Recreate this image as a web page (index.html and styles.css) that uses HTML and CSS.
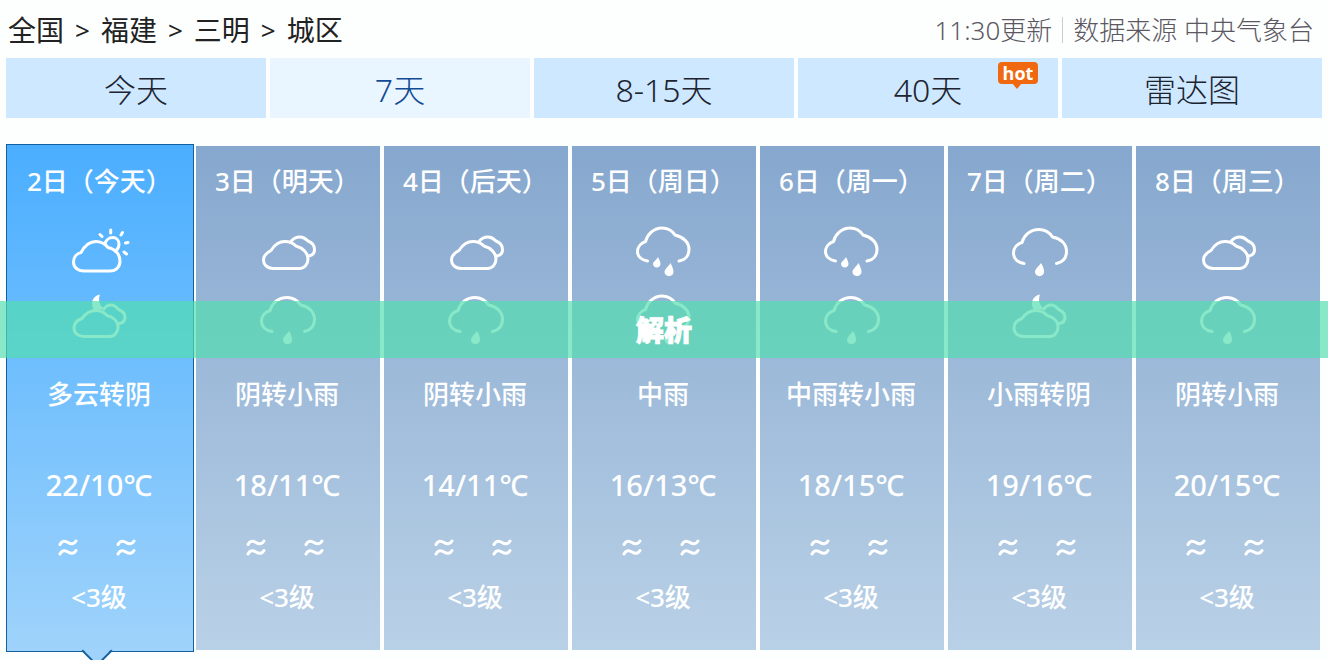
FILE: index.html
```html
<!DOCTYPE html>
<html lang="zh-CN">
<head>
  <meta charset="UTF-8">
  <title>城区天气预报</title>
  <link rel="stylesheet" href="styles.css">
</head>
<body>

  <!-- Weather icons -->
  <svg class="icon-defs" width="0" height="0" aria-hidden="true">
    <symbol id="cloudy-day" viewBox="0 0 60 60">
      <path d="M14 49 C7.5 49 3.5 45 3.5 40 C3.5 35 7 31.5 11 30.5 C14 25 19 19.5 26 19.5 C31 19.5 35 22 38 25.5 C45 27 50 32 50 39 C50 45 46 49 40 49 Z"/>
      <path d="M35 22 C36 17.5 39.500 15.500 42.500 15.500 C46.500 15.500 49 18.500 49 22 C49 25 48 27 46 28.500"/>
      <path d="M30 12.500 L32 14.500 M40.700 8 V11 M51 13 L52.500 10.500 M55.500 21 L58 20.500 M54 30 L56.500 32"/>
    </symbol>
    <symbol id="cloudy-night" viewBox="0 0 60 60">
      <path d="M14 46.500 C8 46.500 4 43 4 38 C4 33.500 7.500 30 12 28.500 C15 24 19 20.500 26 20.500 C31 20.500 34 22 37 25.500 C43 27 48 31 48 37 C48 42.500 44.500 46.500 39.500 46.500 Z"/>
      <path d="M34 19 C36 16 38.500 15 41 15 C44.500 15 46.500 17 48.500 19.500 C52.500 21 55 24 55 27.500 C55 31 52.500 33 49 33.500"/>
      <path class="solid" d="M30 4.500 C22 6 20 14 24 20 L35 19 C29 16 28 10 30 4.500 Z"/>
    </symbol>
    <symbol id="overcast" viewBox="0 0 60 60">
      <path d="M15 46.500 C9 46.500 5.500 42.500 5.500 38 C5.500 33.500 9 30.500 13 28.500 C16 23.500 20.500 19.500 27 19.500 C32 19.500 35 21 38 24 C45 26 50 31 50 37 C50 42 46.500 46.500 41.500 46.500 Z"/>
      <path d="M32.500 20 C35 16.500 38 15 42 15 C45.500 15 48 17 50 19 C54 20.500 56.500 24 56.500 27.500 C56.500 31 54.500 33.500 50.500 34"/>
    </symbol>
    <symbol id="light-rain" viewBox="0 0 60 60">
      <path d="M14 41.500 C7.500 40.500 3.500 36.500 3.500 31 C3.500 26 7 22 12 20.500 C14 13 20.500 7.500 29 7.500 C35 7.500 39.500 10.500 42.500 15 C51 16.500 56.500 22 56.500 29.500 C56.500 35.500 53 40 46.500 41.500"/>
      <path class="solid" d="M31 41 C34 46 34 48 34 50 C34 55.500 25 55.500 25 50 C25 47 28 45 31 41 Z"/>
    </symbol>
    <symbol id="moderate-rain" viewBox="0 0 60 60">
      <path d="M13.500 39 C7.500 38 3.500 34.500 3.500 29.500 C3.500 25 7 21 11.500 19.500 C13.500 12 20 6 28 6 C34 6 38 8.500 41 13 C49.500 15 55 20.500 55 27.500 C55 33.500 51.500 38 45 39"/>
      <path class="solid" d="M24 35 C26 39 26.500 40.500 26.500 42 C26.500 46.500 19 46.500 19 42 C19 40 22 38.500 24 35 Z"/>
      <path class="solid" d="M36.500 41 C39 46 39.500 48 39.500 50 C39.500 55.500 30.500 55.500 30.500 50 C30.500 47 34 45 36.500 41 Z"/>
    </symbol>
    <symbol id="wind" viewBox="0 0 20 18">
      <path d="M2 5.500 C4 1.500 7 1.500 10 3.500 C13 5.500 16 5.500 18 2 M2 15 C4 11 7 11 10 13 C13 15 16 15 18 11.500"/>
    </symbol>
  </svg>

  <div class="page">
    <header class="header">
      <nav class="crumbs">
        <a href="#">全国</a><span>&gt;</span>
        <a href="#">福建</a><span>&gt;</span>
        <a href="#">三明</a><span>&gt;</span>
        <a href="#">城区</a>
      </nav>
      <div class="source">
        <span>11:30更新</span>
        <span class="source-name">数据来源 中央气象台</span>
      </div>
    </header>

    <nav class="tabs">
      <a href="#" class="tab">今天</a>
      <a href="#" class="tab active">7天</a>
      <a href="#" class="tab">8-15天</a>
      <a href="#" class="tab">40天<span class="hot">hot</span></a>
      <a href="#" class="tab">雷达图</a>
    </nav>

    <ul class="days">
      <li class="day today">
        <h2>2日（今天）</h2>
        <div class="icons">
          <svg><use href="#cloudy-day"/></svg>
          <svg><use href="#cloudy-night"/></svg>
        </div>
        <p class="weather">多云转阴</p>
        <p class="temp">22/10℃</p>
        <div class="wind">
          <svg><use href="#wind"/></svg>
          <svg><use href="#wind"/></svg>
        </div>
        <p class="level">&lt;3级</p>
      </li>
      <li class="day">
        <h2>3日（明天）</h2>
        <div class="icons">
          <svg><use href="#overcast"/></svg>
          <svg><use href="#light-rain"/></svg>
        </div>
        <p class="weather">阴转小雨</p>
        <p class="temp">18/11℃</p>
        <div class="wind">
          <svg><use href="#wind"/></svg>
          <svg><use href="#wind"/></svg>
        </div>
        <p class="level">&lt;3级</p>
      </li>
      <li class="day">
        <h2>4日（后天）</h2>
        <div class="icons">
          <svg><use href="#overcast"/></svg>
          <svg><use href="#light-rain"/></svg>
        </div>
        <p class="weather">阴转小雨</p>
        <p class="temp">14/11℃</p>
        <div class="wind">
          <svg><use href="#wind"/></svg>
          <svg><use href="#wind"/></svg>
        </div>
        <p class="level">&lt;3级</p>
      </li>
      <li class="day">
        <h2>5日（周日）</h2>
        <div class="icons">
          <svg><use href="#moderate-rain"/></svg>
          <svg><use href="#moderate-rain"/></svg>
        </div>
        <p class="weather">中雨</p>
        <p class="temp">16/13℃</p>
        <div class="wind">
          <svg><use href="#wind"/></svg>
          <svg><use href="#wind"/></svg>
        </div>
        <p class="level">&lt;3级</p>
      </li>
      <li class="day">
        <h2>6日（周一）</h2>
        <div class="icons">
          <svg><use href="#moderate-rain"/></svg>
          <svg><use href="#light-rain"/></svg>
        </div>
        <p class="weather">中雨转小雨</p>
        <p class="temp">18/15℃</p>
        <div class="wind">
          <svg><use href="#wind"/></svg>
          <svg><use href="#wind"/></svg>
        </div>
        <p class="level">&lt;3级</p>
      </li>
      <li class="day">
        <h2>7日（周二）</h2>
        <div class="icons">
          <svg><use href="#light-rain"/></svg>
          <svg><use href="#cloudy-night"/></svg>
        </div>
        <p class="weather">小雨转阴</p>
        <p class="temp">19/16℃</p>
        <div class="wind">
          <svg><use href="#wind"/></svg>
          <svg><use href="#wind"/></svg>
        </div>
        <p class="level">&lt;3级</p>
      </li>
      <li class="day">
        <h2>8日（周三）</h2>
        <div class="icons">
          <svg><use href="#overcast"/></svg>
          <svg><use href="#light-rain"/></svg>
        </div>
        <p class="weather">阴转小雨</p>
        <p class="temp">20/15℃</p>
        <div class="wind">
          <svg><use href="#wind"/></svg>
          <svg><use href="#wind"/></svg>
        </div>
        <p class="level">&lt;3级</p>
      </li>
    </ul>

    <!-- Caption band over the forecast -->
    <div class="banner">解析</div>
  </div>

</body>
</html>
```
FILE: styles.css
```css
* {
  box-sizing: border-box;
}

body {
  margin: 0;
  background-color: #fdfffe;
  color: #222;
  font-family: "Noto Sans", "Noto Sans CJK SC", sans-serif;
}

a {
  color: inherit;
  text-decoration: none;
}

.icon-defs {
  position: absolute;
}

.page {
  position: relative;
  overflow: hidden;
  padding: 0 6px 10px;
}

.header {
  display: flex;
  justify-content: space-between;
  align-items: center;
  height: 58px;
  padding: 2px 8px 0 2px;
}

.crumbs {
  display: flex;
  align-items: center;
  gap: 11px;
  font-size: 28px;
  line-height: 40px;
}

.crumbs span {
  font-size: 26px;
}

.source {
  display: flex;
  align-items: center;
  font-size: 26px;
  font-weight: 300;
  line-height: 26px;
  color: #5c5763;
}

.source-name {
  margin-left: 10px;
  padding-left: 10px;
  border-left: 1px solid #ccc;
}

.tabs {
  display: grid;
  grid-template-columns: repeat(5, 1fr);
  gap: 4px;
}

.tab {
  position: relative;
  height: 60px;
  line-height: 64px;
  background-color: #cee8ff;
  color: #1c2430;
  font-size: 32px;
  font-weight: 300;
  text-align: center;
}

.tab.active {
  background-color: #eaf6ff;
  color: #124a94;
}

.hot {
  position: absolute;
  top: 4px;
  right: 20px;
  width: 40px;
  height: 22px;
  border-radius: 4px;
  background-color: #f0680f;
  color: #fff;
  font-family: "Open Sans", sans-serif;
  font-size: 18px;
  font-weight: bold;
  line-height: 22px;
}

.hot::after {
  content: "";
  position: absolute;
  top: 21px;
  left: 14px;
  border: 5px solid transparent;
  border-top: 6px solid #f0680f;
  border-bottom: 0;
}

.days {
  display: grid;
  grid-template-columns: repeat(7, 1fr);
  gap: 4px;
  margin: 28px 0 0;
  padding: 0 2px;
  list-style: none;
}

.day {
  padding: 17px 0 35px;
  background: linear-gradient(#86a7ce, #b9d1e7);
  color: #fff;
  font-size: 26px;
  line-height: 36px;
  text-align: center;
}

.day.today {
  position: relative;
  margin: -2px;
  padding: 18px 1px 36px;
  border: 1px solid #12609f;
  background: linear-gradient(#4aaeff, #9fd3fb);
}

/* arrow under the selected day */
.today::after {
  content: "";
  position: absolute;
  bottom: -11px;
  left: 79px;
  width: 20px;
  height: 20px;
  border: solid #12609f;
  border-width: 0 2px 2px 0;
  background: linear-gradient(135deg, transparent 50%, #9fd3fb 50%);
  transform: rotate(45deg);
}

.day h2 {
  margin: 0 0 23px;
  padding-left: 19px;
  font-size: 26px;
  font-weight: 500;
  text-align: left;
  white-space: nowrap;
}

.day p {
  margin: 0;
  padding-right: 2px;
}

.day svg {
  fill: none;
  stroke: #fff;
  stroke-width: 3px;
  stroke-linecap: round;
  stroke-linejoin: round;
}

.solid {
  fill: #fff;
  stroke: none;
}

.icons {
  display: flex;
  flex-direction: column;
  align-items: center;
  gap: 8px;
  margin-bottom: 26px;
}

.icons svg {
  width: 60px;
  height: 60px;
}

.day .weather {
  margin-bottom: 55px;
  font-weight: 500;
}

.day .temp {
  margin-bottom: 36px;
  font-size: 29px;
  font-weight: 500;
}

.wind {
  display: flex;
  justify-content: center;
  gap: 38px;
  margin-bottom: 22px;
  padding-right: 6px;
}

.wind svg {
  width: 20px;
  height: 18px;
}

.day .level {
  font-size: 26px;
  font-weight: 500;
}

.banner {
  position: absolute;
  top: 301px;
  left: 0;
  right: 0;
  height: 57px;
  background-color: rgba(83, 222, 175, 0.69);
  color: #fff;
  font-size: 28px;
  font-weight: 900;
  line-height: 58px;
  text-align: center;
  -webkit-text-stroke: 1px #fff;
}
```
